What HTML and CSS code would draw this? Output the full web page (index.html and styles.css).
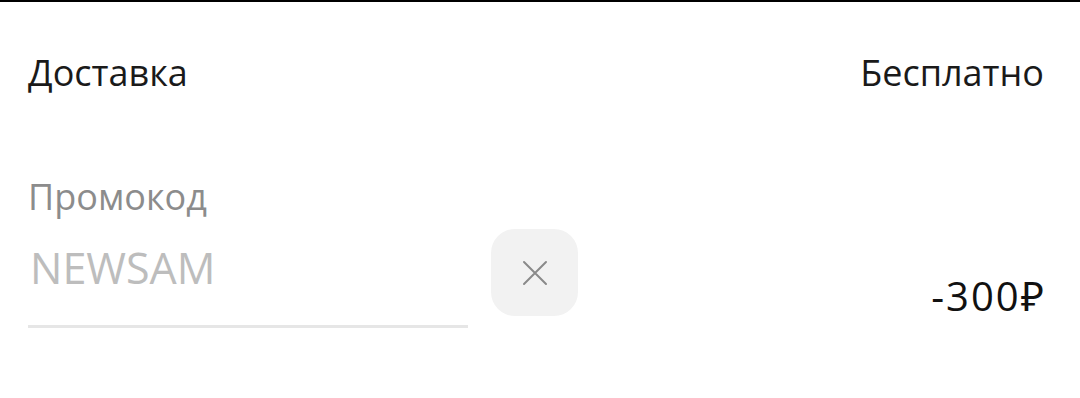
FILE: index.html
```html
<!DOCTYPE html>
<html lang="ru">
<head>
<meta charset="utf-8">
<link rel="stylesheet" href="styles.css">
</head>
<body>
<div class="page">
  <div class="row delivery">
    <span class="label">Доставка</span>
    <span class="value">Бесплатно</span>
  </div>
  <div class="row promo">
    <div class="field">
      <div class="field-label">Промокод</div>
      <div class="field-input">NEWSAM</div>
    </div>
    <button class="clear" aria-label="Очистить">
      <svg width="28" height="28" viewBox="0 0 28 28"><path d="M3 3L25 25M25 3L3 25" stroke="#8a8a8a" stroke-width="2" stroke-linecap="round"/></svg>
    </button>
    <span class="discount">-300₽</span>
  </div>
</div>
</body>
</html>
```
FILE: styles.css
```css
html, body { margin: 0; padding: 0; background: #fff; }
body { font-family: "Open Sans", "Noto Sans", sans-serif; }
.page {
  border-top: 2px solid #000;
  width: 1080px;
  height: 396px;
  padding: 0 36px 0 28px;
  box-sizing: border-box;
}
.row { display: flex; align-items: center; }
.delivery {
  justify-content: space-between;
  padding-top: 46px;
  font-size: 36px;
  line-height: 50px;
  color: #1a1a1a;
}
.promo {
  margin-top: 74px;
  align-items: flex-start;
}
.field { width: 440px; }
.field-label {
  font-size: 36px;
  line-height: 50px;
  color: #8c8c8c;
}
.field-input {
  font-size: 43px;
  line-height: 56px;
  color: #bdbdbd;
  margin-top: 18px;
  padding-left: 2px;
  padding-bottom: 29px;
  border-bottom: 3px solid #e6e6e6;
}
.clear {
  margin: 57px 0 0 23px;
  width: 87px;
  height: 87px;
  border: none;
  border-radius: 24px;
  background: #f2f2f2;
  display: flex;
  align-items: center;
  justify-content: center;
  padding: 0;
}
.discount {
  margin-left: auto;
  margin-top: 96px;
  font-size: 40px;
  line-height: 56px;
  letter-spacing: 2px;
  margin-right: -2px;
  color: #111;
}
```
